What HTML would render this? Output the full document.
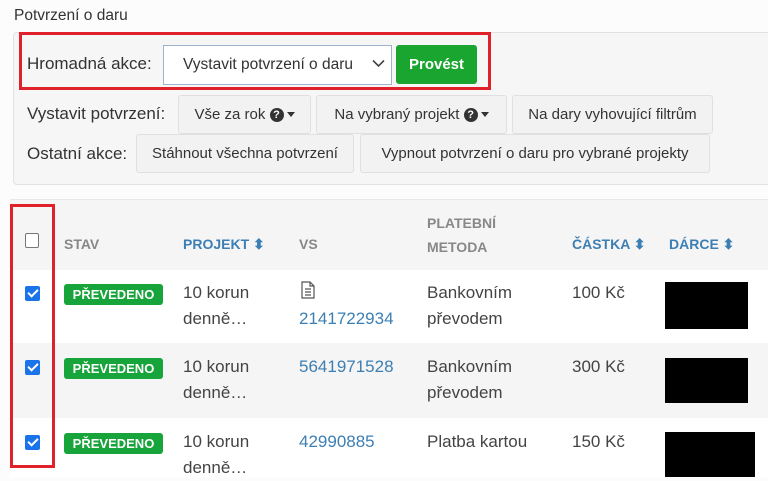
<!DOCTYPE html>
<html><head><meta charset="utf-8"><style>
body{margin:0;width:768px;height:471px;overflow:hidden;background:#fcfcfc;font-family:"Liberation Sans",sans-serif;color:#333;position:relative}
.a{position:absolute;white-space:nowrap}
.btn{position:absolute;background:#f2f2f2;border:1px solid #e0e0e0;border-radius:3px;box-sizing:border-box;font-size:15px;color:#333;display:flex;align-items:center;justify-content:center;white-space:nowrap}
.lbl{position:absolute;font-size:17px;color:#333;white-space:nowrap}
.h{position:absolute;font-size:14px;font-weight:bold;color:#888;top:236px;white-space:nowrap}
.hb{color:#3d7fb3}
.cb{position:absolute;left:25px;width:15px;height:15px;border-radius:2px;background:#1a73e8}
.cb::after{content:"";position:absolute;left:5px;top:1px;width:4px;height:8px;border:solid #fff;border-width:0 2px 2px 0;transform:rotate(45deg)}
.badge{position:absolute;left:64px;width:99px;height:21px;background:#17a43a;color:#fff;font-weight:bold;font-size:13px;border-radius:3px;text-align:center;line-height:21px}
.t{position:absolute;font-size:17px;color:#444;line-height:26px;white-space:nowrap}
.link{color:#3d7fb3}
.blk{position:absolute;background:#000}
.q{display:inline-block;width:14px;height:14px;border-radius:50%;background:#333;color:#fff;font-size:11px;font-weight:bold;text-align:center;line-height:14px;vertical-align:-1px}
.car{display:inline-block;width:0;height:0;border-left:4.5px solid transparent;border-right:4.5px solid transparent;border-top:5px solid #333;vertical-align:2px;margin-left:3px}
</style></head><body>
<div class="a" style="left:14px;top:7px;font-size:15.5px;color:#333">Potvrzení o daru</div>
<div class="a" style="left:13px;top:32px;width:770px;height:153px;background:#f6f6f6;border:1px solid #e2e2e2;border-radius:4px;box-sizing:border-box"></div>
<div class="a" style="left:19px;top:32px;width:472px;height:58px;border:3px solid #e0202a;box-sizing:border-box"></div>
<div class="lbl" style="left:27px;top:54px">Hromadná akce:</div>
<div class="a" style="left:163px;top:45px;width:229px;height:40px;background:#fff;border:1px solid #9db4cc;box-sizing:border-box"></div>
<div class="a" style="left:183px;top:56px;font-size:15.5px;color:#333">Vystavit potvrzení o daru</div>
<svg class="a" style="left:372px;top:59px" width="13" height="9"><path d="M1 1.5 L6.5 7 L12 1.5" fill="none" stroke="#444" stroke-width="1.6"/></svg>
<div class="btn" style="left:396px;top:45px;width:81px;height:39px;background:#1aa531;border-color:#1aa531;color:#fff;font-weight:bold;font-size:15px">Provést</div>
<div class="lbl" style="left:27px;top:104px">Vystavit potvrzení:</div>
<div class="btn" style="left:178px;top:95px;width:133px;height:39px">Vše za rok&nbsp;<span class="q">?</span><span class="car"></span></div>
<div class="btn" style="left:316px;top:95px;width:191px;height:39px">Na vybraný projekt&nbsp;<span class="q">?</span><span class="car"></span></div>
<div class="btn" style="left:512px;top:95px;width:201px;height:39px">Na dary vyhovující filtrům</div>
<div class="lbl" style="left:27px;top:144px">Ostatní akce:</div>
<div class="btn" style="left:136px;top:134px;width:218px;height:39px">Stáhnout všechna potvrzení</div>
<div class="btn" style="left:360px;top:134px;width:350px;height:39px">Vypnout potvrzení o daru pro vybrané projekty</div>

<div class="a" style="left:10px;top:199px;width:770px;height:71px;background:#f5f5f5;border-top:1px solid #e8e8e8"></div>
<div class="a" style="left:10px;top:270px;width:770px;height:73px;background:#fff"></div>
<div class="a" style="left:10px;top:343px;width:770px;height:75px;background:#f5f5f5"></div>
<div class="a" style="left:10px;top:418px;width:770px;height:60px;background:#fff"></div>
<div class="a" style="left:25px;top:233px;width:14px;height:15px;border:1px solid #777;border-radius:2px;background:#fff;box-sizing:border-box"></div>
<div class="h" style="left:64px">STAV</div>
<div class="h hb" style="left:183px">PROJEKT ⬍</div>
<div class="h" style="left:299px">VS</div>
<div class="h" style="left:427px;top:211px;line-height:24px">PLATEBNÍ<br>METODA</div>
<div class="h hb" style="left:572px">ČÁSTKA ⬍</div>
<div class="h hb" style="left:669px">DÁRCE ⬍</div>

<div class="cb" style="top:286px"></div>
<div class="badge" style="top:284px">PŘEVEDENO</div>
<div class="t" style="left:183px;top:280px">10 korun<br>denně…</div>
<svg class="a" style="left:301px;top:281px" width="14" height="18"><path d="M1 1h8l4 4v12H1z M9 1v4h4 M4 8h6 M4 11h6 M4 14h6" fill="none" stroke="#555" stroke-width="1.2"/></svg>
<div class="t link" style="left:299px;top:306px">2141722934</div>
<div class="t" style="left:427px;top:280px">Bankovním<br>převodem</div>
<div class="t" style="left:572px;top:280px">100 Kč</div>
<div class="blk" style="left:665px;top:282px;width:83px;height:47px"></div>

<div class="cb" style="top:360px"></div>
<div class="badge" style="top:358px">PŘEVEDENO</div>
<div class="t" style="left:183px;top:354px">10 korun<br>denně…</div>
<div class="t link" style="left:299px;top:354px">5641971528</div>
<div class="t" style="left:427px;top:354px">Bankovním<br>převodem</div>
<div class="t" style="left:572px;top:354px">300 Kč</div>
<div class="blk" style="left:665px;top:358px;width:83px;height:45px"></div>

<div class="cb" style="top:435px"></div>
<div class="badge" style="top:433px">PŘEVEDENO</div>
<div class="t" style="left:183px;top:429px">10 korun<br>denně…</div>
<div class="t link" style="left:299px;top:429px">42990885</div>
<div class="t" style="left:427px;top:429px">Platba kartou</div>
<div class="t" style="left:572px;top:429px">150 Kč</div>
<div class="blk" style="left:665px;top:432px;width:90px;height:45px"></div>

<div class="a" style="left:10px;top:204px;width:45px;height:264px;border:3px solid #e0202a;box-sizing:border-box"></div>
</body></html>
